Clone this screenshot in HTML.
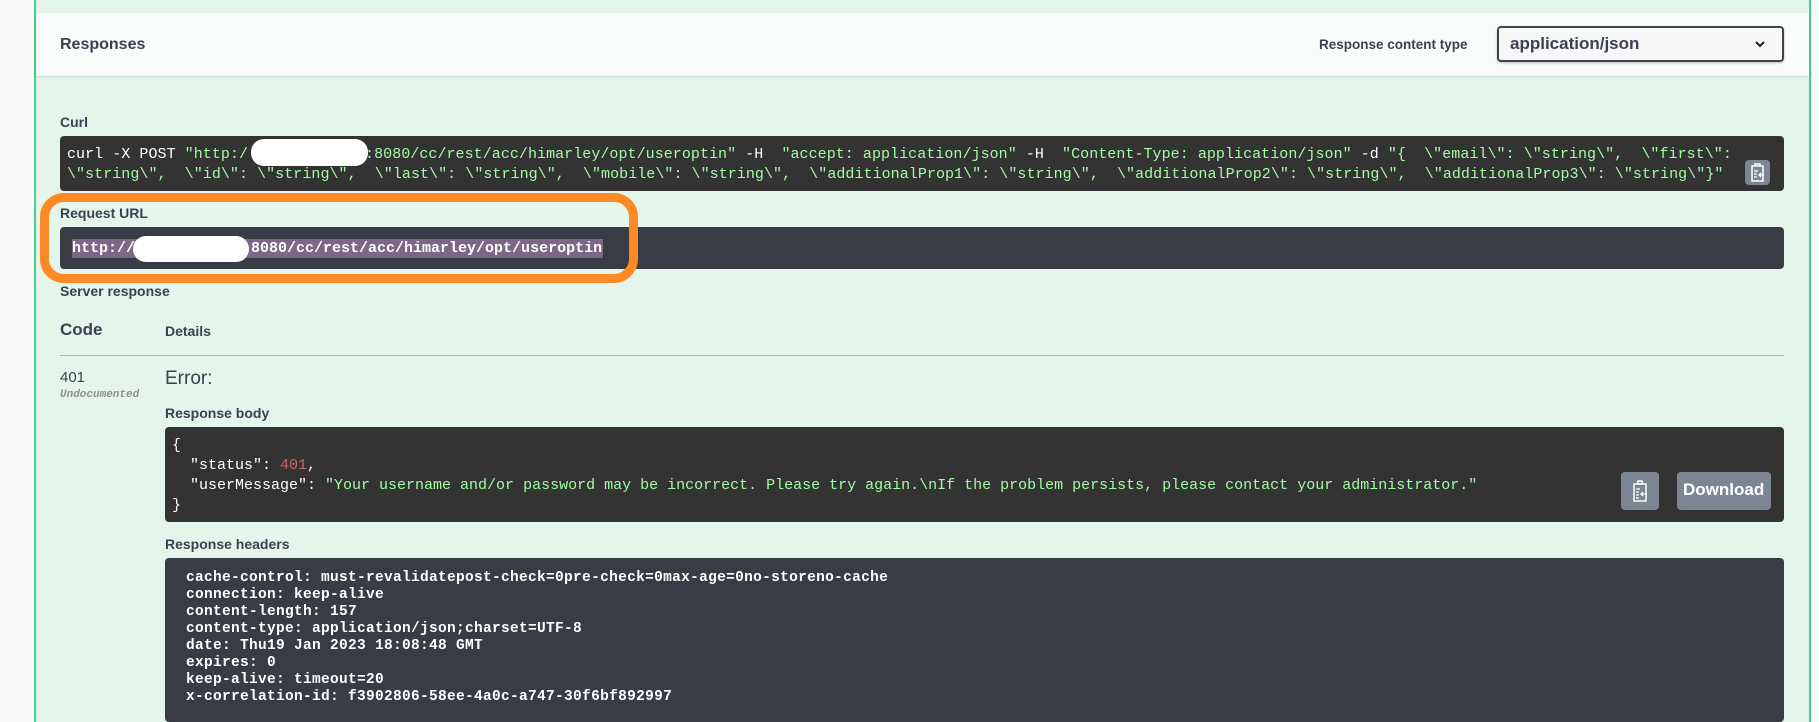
<!DOCTYPE html>
<html><head><meta charset="utf-8"><style>
*{margin:0;padding:0;box-sizing:border-box}
body{width:1819px;height:722px;overflow:hidden;background:#fafafa;font-family:"Liberation Sans",sans-serif;color:#3b4151;position:relative}
.a{position:absolute;white-space:pre}
.main{position:absolute;left:34px;top:0;width:1777px;height:722px;background:#e4f5ec;border-left:2px solid #49cc90;border-right:2px solid #49cc90}
.hdr{position:absolute;left:36px;top:13px;width:1773px;height:63px;background:#f9fcfb;box-shadow:0 1px 2px rgba(0,0,0,.12)}
.lbl{font-weight:bold;font-size:14px}
.mono{font-family:"Liberation Mono",monospace}
.box{position:absolute;border-radius:4px}
.g{color:#a2fca2}
.btn{position:absolute;background:#7d8492;border-radius:4px}
</style></head><body>
<div class="main"></div>
<div class="hdr"></div>
<div class="a" style="left:60px;top:36px;font-size:16px;font-weight:bold">Responses</div>
<div class="a lbl" style="left:1319px;top:37px;font-size:13.5px">Response content type</div>
<div class="box" style="left:1497px;top:26px;width:287px;height:36px;border:2px solid #41444e;background:#f7f7f7;border-radius:4px;box-shadow:0 1px 2px rgba(0,0,0,.25)"></div>
<div class="a" style="left:1510px;top:34px;font-size:17px;font-weight:bold;color:#3b4151">application/json</div>
<svg class="a" style="left:1754px;top:40px" width="12" height="9" viewBox="0 0 12 9"><path d="M2 2l4 4 4-4" stroke="#222" stroke-width="2" fill="none"/></svg>

<div class="a lbl" style="left:60px;top:114px">Curl</div>
<div class="box" style="left:60px;top:136px;width:1724px;height:55px;background:#333"></div>
<div class="a mono g" style="left:67px;top:145px;font-size:15px;line-height:20px;letter-spacing:0.05px;color:#fff"><span style="color:#fff">curl -X POST </span><span class="g">"http:/</span><span style="display:inline-block;width:117px"></span><span class="g">:8080/cc/rest/acc/himarley/opt/useroptin"</span> -H  <span class="g">"accept: application/json"</span> -H  <span class="g">"Content-Type: application/json"</span> -d <span class="g">"{  \"email\": \"string\",  \"first\":
\"string\",  \"id\": \"string\",  \"last\": \"string\",  \"mobile\": \"string\",  \"additionalProp1\": \"string\",  \"additionalProp2\": \"string\",  \"additionalProp3\": \"string\"}"</span></div>
<div class="a" style="left:251px;top:139px;width:117px;height:27px;background:#fff;border-radius:13px"></div>
<div class="btn" style="left:1745px;top:160px;width:25px;height:25px"></div>
<svg class="a" style="left:1748px;top:162px" width="19" height="21" viewBox="0 0 19 21"><path d="M4 4h11v15H4z M7 4V2h5v2" stroke="#fff" stroke-width="1.5" fill="none"/><path d="M6 9h4M6 12h3M6 15h3M16 13h-5m2-2l-2 2 2 2" stroke="#fff" stroke-width="1.3" fill="none"/></svg>

<div class="a lbl" style="left:60px;top:205px">Request URL</div>
<div class="box" style="left:60px;top:227px;width:1724px;height:42px;background:#393c45"></div>
<div class="a mono" style="left:72px;top:239px;height:19px;width:531px;background:#7e6786"></div>
<div class="a mono" style="left:72px;top:239px;font-size:15px;font-weight:bold;color:#fff;line-height:19px">http://<span style="display:inline-block;width:107px"></span>:8080/cc/rest/acc/himarley/opt/useroptin</div>
<div class="a" style="left:133px;top:236px;width:116px;height:26px;background:#fff;border-radius:13px"></div>
<div class="a" style="left:40px;top:193px;width:598px;height:90px;border:9px solid #fd8a25;border-radius:24px"></div>

<div class="a lbl" style="left:60px;top:283px">Server response</div>
<div class="a" style="left:60px;top:320px;font-size:17px;font-weight:bold">Code</div>
<div class="a lbl" style="left:165px;top:323px">Details</div>
<div class="a" style="left:60px;top:355px;width:1724px;height:1px;background:#a5b8ad"></div>

<div class="a" style="left:60px;top:369px;font-size:15px">401</div>
<div class="a mono" style="left:60px;top:389px;font-size:11px;font-weight:bold;font-style:italic;color:#909090">Undocumented</div>
<div class="a" style="left:165px;top:368px;font-size:19px">Error:</div>
<div class="a lbl" style="left:165px;top:405px">Response body</div>
<div class="box" style="left:165px;top:427px;width:1619px;height:95px;background:#333"></div>
<div class="a mono" style="left:172px;top:436px;font-size:15px;line-height:20px;color:#fff">{
  "status": <span style="color:#d36363">401</span>,
  "userMessage": <span class="g">"Your username and/or password may be incorrect. Please try again.\nIf the problem persists, please contact your administrator."</span>
}</div>
<div class="btn" style="left:1621px;top:472px;width:38px;height:38px"></div>
<svg class="a" style="left:1630px;top:479px" width="20" height="24" viewBox="0 0 20 24"><path d="M4 5h12v17H4z M8 5V2h4v3" stroke="#fff" stroke-width="1.5" fill="none"/><path d="M6 10h4M6 13h3M6 16h3M6 19h3M17 15h-6m2-2l-2 2 2 2" stroke="#fff" stroke-width="1.3" fill="none"/></svg>
<div class="btn" style="left:1677px;top:472px;width:94px;height:38px"></div>
<div class="a" style="left:1683px;top:480px;font-size:17px;font-weight:bold;color:#fff">Download</div>

<div class="a lbl" style="left:165px;top:536px">Response headers</div>
<div class="box" style="left:165px;top:558px;width:1619px;height:164px;background:#393c45"></div>
<div class="a mono" style="left:186px;top:570px;font-size:14.5px;line-height:17px;font-weight:bold;color:#fff;letter-spacing:0.3px">cache-control: must-revalidatepost-check=0pre-check=0max-age=0no-storeno-cache
connection: keep-alive
content-length: 157
content-type: application/json;charset=UTF-8
date: Thu19 Jan 2023 18:08:48 GMT
expires: 0
keep-alive: timeout=20
x-correlation-id: f3902806-58ee-4a0c-a747-30f6bf892997</div>
</body></html>
